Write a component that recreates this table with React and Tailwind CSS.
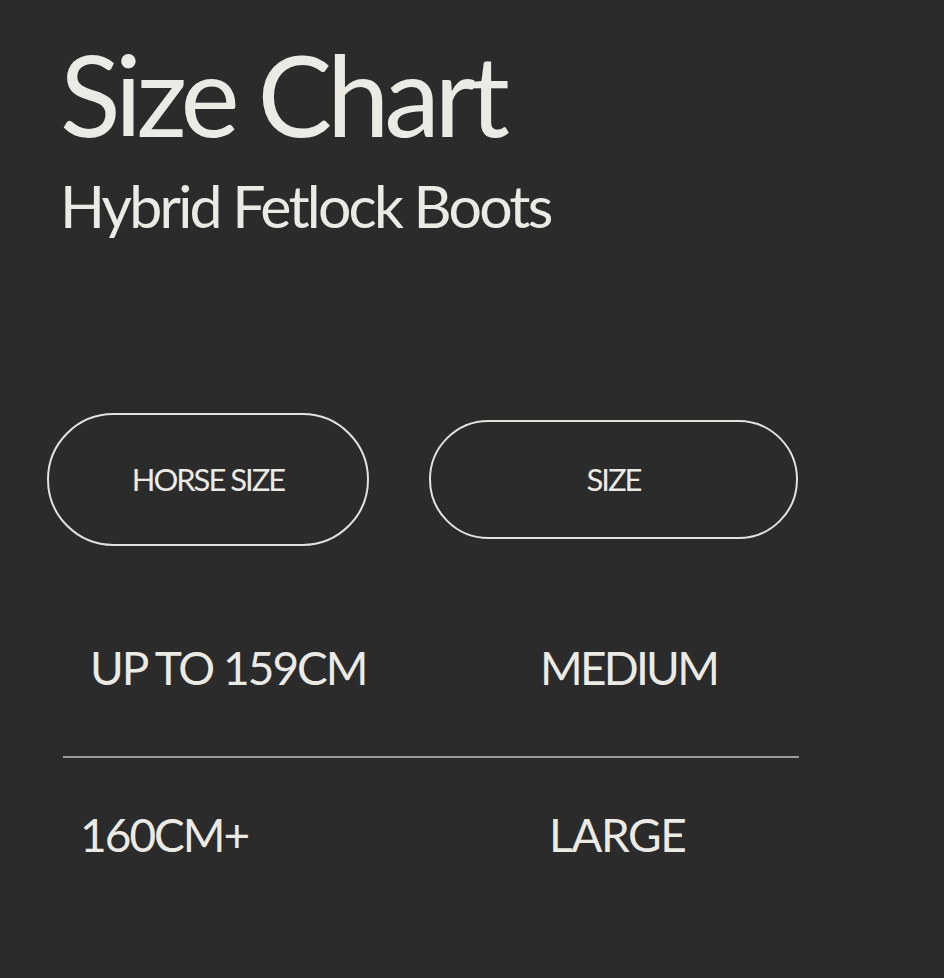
import React from 'react';

const rows = [
  { horse: 'UP TO 159CM', size: 'MEDIUM', col: 'w-[477px] pl-[27px]', gap: 'mt-[99px]', sizeTrack: 'tracking-[-0.06em]' },
  { horse: '160CM+', size: 'LARGE', col: 'w-[486px] pl-[17px]', gap: 'mt-[54px]', sizeTrack: 'tracking-[-0.03em]' },
];

const Row = ({ row }) => (
  <div className={`flex h-[46px] text-[46px] leading-none ${row.gap}`}>
    <span className={`block tracking-[-0.043em] ${row.col}`}>{row.horse}</span>
    <span className={`block ${row.sizeTrack}`}>{row.size}</span>
  </div>
);

const App = () => {
  return (
    <div className="min-h-[978px] w-full bg-[#2b2b2b] text-[#ebeae5] font-['Lato',sans-serif]">
      {/* Heading */}
      <div className="pl-[60px] pt-[38px]">
        <h1 className="text-[112px] leading-none font-normal tracking-[-0.048em]">Size Chart</h1>
        <h2 className="mt-[26px] text-[59px] leading-none font-normal tracking-[-0.047em]">Hybrid Fetlock Boots</h2>
      </div>

      {/* Column labels */}
      <div className="mt-[178px] flex h-[133px] items-center pl-[47px] gap-[60px]">
        <div className="flex h-[133px] w-[322px] items-center justify-center rounded-full border-2 border-[#e3e2dd]">
          <span className="text-[31px] leading-none tracking-[-0.065em]">HORSE SIZE</span>
        </div>
        <div className="flex h-[119px] w-[369px] items-center justify-center rounded-full border-2 border-[#e3e2dd]">
          <span className="text-[31px] leading-none tracking-[-0.065em]">SIZE</span>
        </div>
      </div>

      {/* Rows */}
      <div className="ml-[63px] w-[736px]">
        <Row row={rows[0]} />
        <div className="mt-[65px] h-[2px] bg-[#9b9b99]" />
        <Row row={rows[1]} />
      </div>
    </div>
  );
};

export default App;
